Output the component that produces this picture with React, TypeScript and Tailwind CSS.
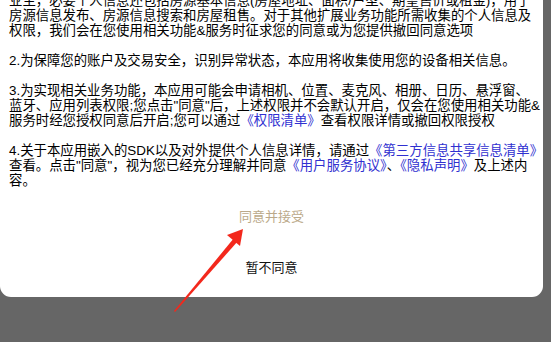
const link = "text-[#3030d0]";

function Link({ children }: { children: string }) {
  return <span className={link}>{children}</span>;
}

export default function App() {
  return (
    <div
      className="relative w-[551px] h-[342px] overflow-hidden bg-[#666666]"
      style={{ fontFamily: '"Liberation Sans", "Noto Sans CJK SC", sans-serif' }}
    >
      <div className="w-[543px] h-[297px] bg-white rounded-b-[11px] flex flex-col overflow-hidden">
        <div className="-mt-[7px] pl-[9px] text-[13.4px] leading-[15px] text-black whitespace-nowrap">
          <p>业主，必要个人信息还包括房源基本信息(房屋地址、面积/户型、期望售价或租金)，用于</p>
          <p>房源信息发布、房源信息搜索和房屋租售。对于其他扩展业务功能所需收集的个人信息及</p>
          <p>权限，我们会在您使用相关功能&amp;服务时征求您的同意或为您提供撤回同意选项</p>
          <p className="h-[15px]" />
          <p>2.为保障您的账户及交易安全，识别异常状态，本应用将收集使用您的设备相关信息。</p>
          <p className="h-[15px]" />
          <p>3.为实现相关业务功能，本应用可能会申请相机、位置、麦克风、相册、日历、悬浮窗、</p>
          <p>蓝牙、应用列表权限;您点击"同意"后，上述权限并不会默认开启，仅会在您使用相关功能&amp;</p>
          <p>
            服务时经您授权同意后开启;您可以通过<Link>《权限清单》</Link>查看权限详情或撤回权限授权
          </p>
          <p className="h-[15px]" />
          <p>
            4.关于本应用嵌入的SDK以及对外提供个人信息详情，请通过<Link>《第三方信息共享信息清单》</Link>
          </p>
          <p>
            查看。点击"同意"，视为您已经充分理解并同意<Link>《用户服务协议》</Link>、<Link>《隐私声明》</Link>及上述内
          </p>
          <p>容。</p>
        </div>
        <div className="flex flex-col items-center text-[13px] leading-[16px]">
          <button className="mt-[21px] text-[#bba98a]">同意并接受</button>
          <button className="mt-[35px] text-[#111111]">暂不同意</button>
        </div>
      </div>
      <svg className="absolute left-0 top-0 pointer-events-none" width="551" height="342">
        <polygon points="174,311 234,238 238,241 175,312" fill="#f3281c" />
        <polygon points="243,229 227,235 240,246" fill="#f3281c" />
      </svg>
    </div>
  );
}
